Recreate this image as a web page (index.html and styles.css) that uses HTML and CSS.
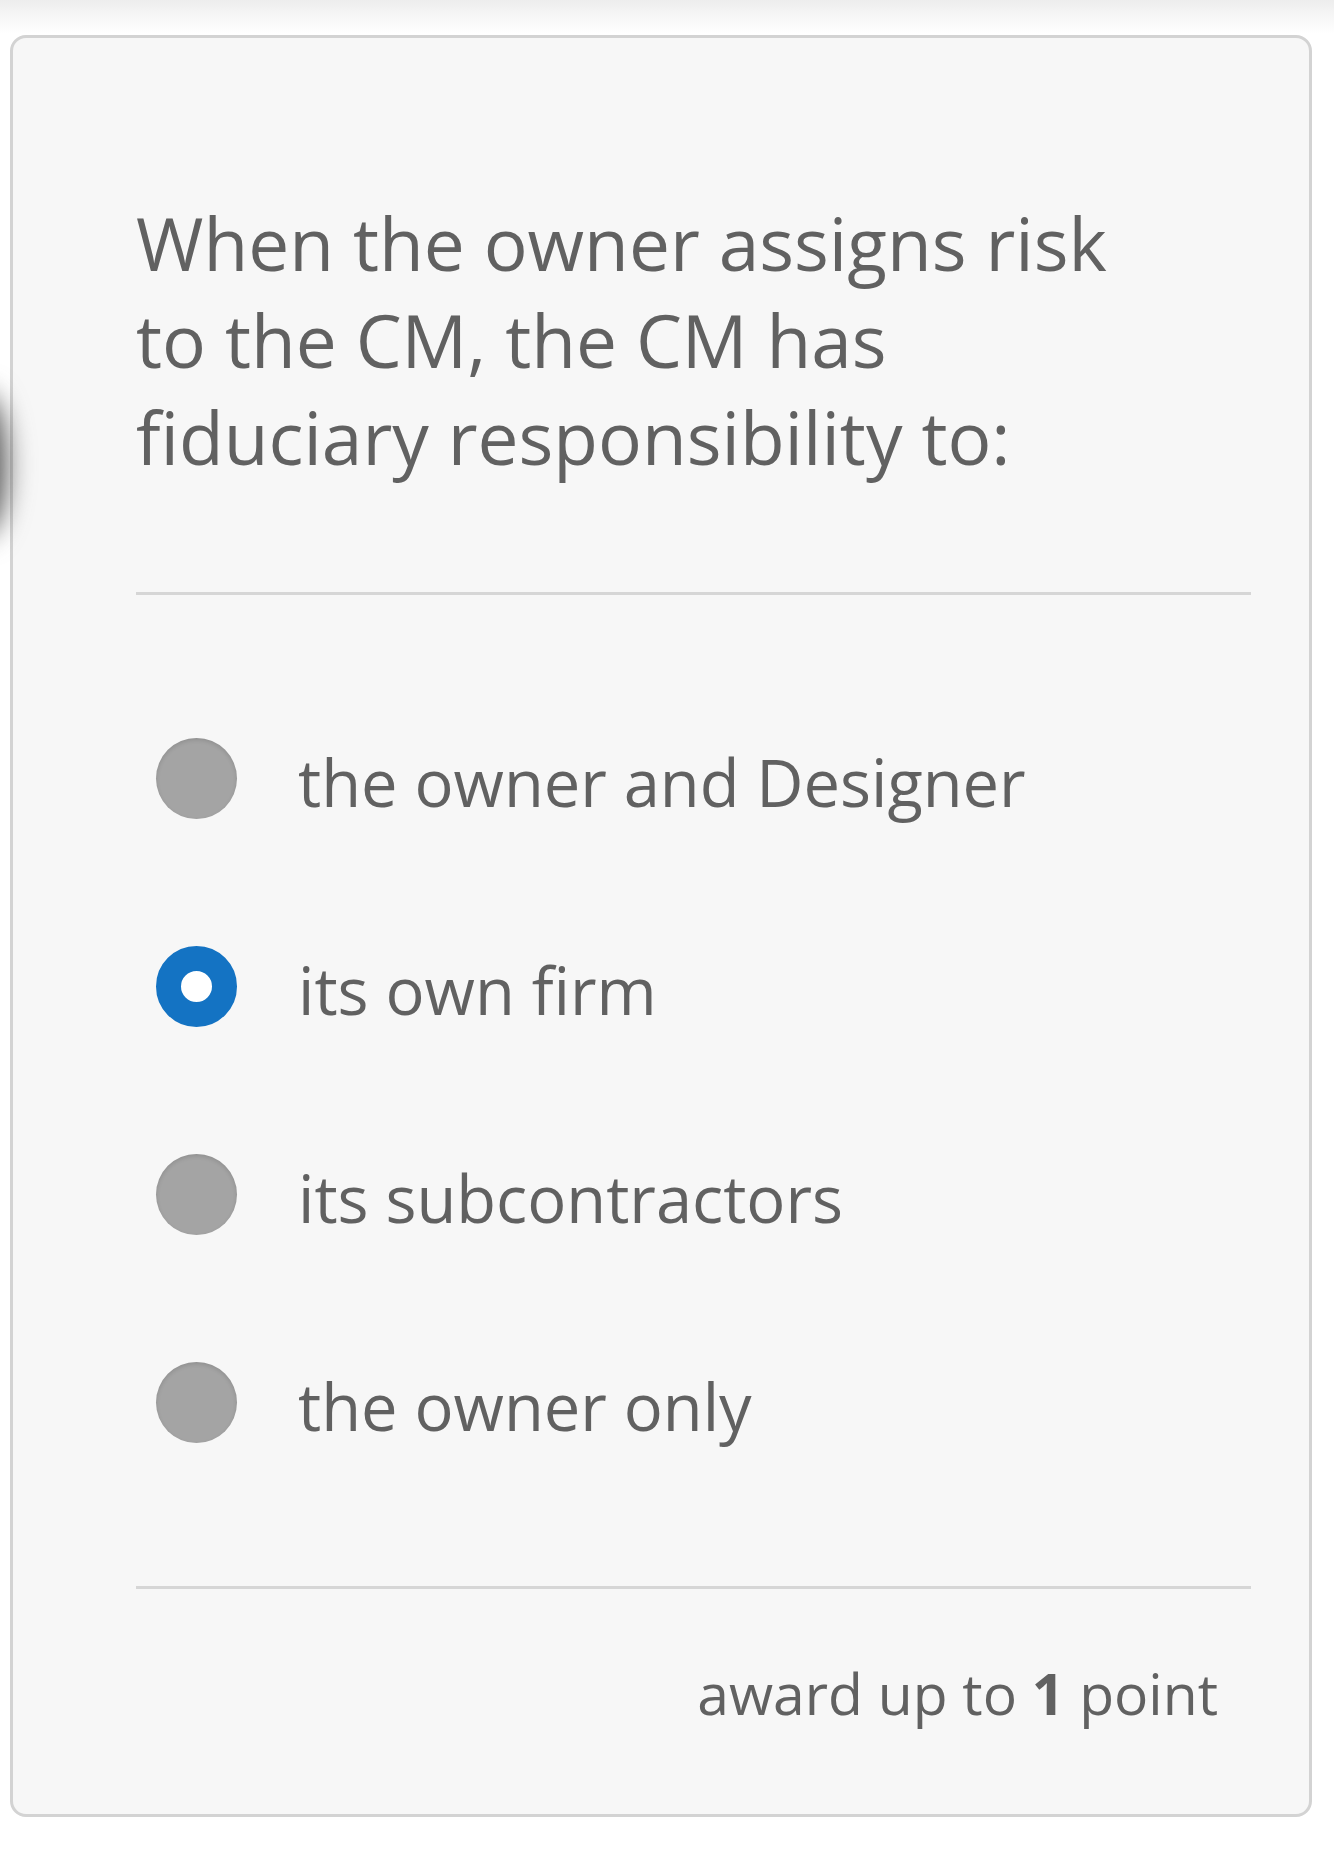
FILE: index.html
```html
<!DOCTYPE html>
<html lang="en">
<head>
<meta charset="utf-8">
<title>Question</title>
<link rel="stylesheet" href="styles.css">
</head>
<body>
<div class="topbar"></div>
<div class="edge-shadow"></div>
<main class="card">
  <h1 class="question">When the owner assigns risk to the CM, the CM has fiduciary responsibility to:</h1>
  <hr class="divider">
  <ul class="options">
    <li class="option"><span class="radio"></span><span class="label">the owner and Designer</span></li>
    <li class="option"><span class="radio checked"></span><span class="label">its own firm</span></li>
    <li class="option"><span class="radio"></span><span class="label">its subcontractors</span></li>
    <li class="option"><span class="radio"></span><span class="label">the owner only</span></li>
  </ul>
  <hr class="divider">
  <p class="award">award up to <strong>1</strong> point</p>
</main>
</body>
</html>
```

FILE: styles.css
```css
html, body {
  margin: 0;
  padding: 0;
  background: #ffffff;
}
body {
  font-family: "Open Sans", "Noto Sans", sans-serif;
  color: #616161;
  position: relative;
  overflow: hidden;
  min-height: 1852px;
}
.topbar {
  height: 34px;
  background: linear-gradient(#ededed, #f6f6f6 45%, #ffffff);
}
.edge-shadow {
  position: absolute;
  left: -44px;
  top: 392px;
  width: 50px;
  height: 145px;
  border-radius: 50%;
  background: #4e4e4e;
  filter: blur(14px);
}
.card {
  margin: 1px 0 0 10px;
  width: 1302px;
  box-sizing: border-box;
  background: #f7f7f7;
  border: 3px solid #d3d3d3;
  border-radius: 16px;
  padding: 156px 58px 83px 123px;
}
.question {
  margin: 0;
  font-size: 73px;
  font-weight: 400;
  line-height: 97px;
  width: 1010px;
}
.divider {
  margin: 0;
  border: 0;
  height: 3px;
  background: #d6d6d6;
}
.question + .divider {
  margin-top: 107px;
}
.options {
  list-style: none;
  margin: 143px 0 0 0;
  padding: 0 0 139px 20px;
  display: flex;
  flex-direction: column;
  gap: 123px;
}
.option {
  display: flex;
  align-items: flex-start;
  gap: 61px;
}
.radio {
  flex: none;
  width: 81px;
  height: 81px;
  border-radius: 50%;
  background: #a4a4a4;
  box-shadow: inset 0 2px 4px rgba(0,0,0,0.12);
}
.radio.checked {
  background: #ffffff;
  border: 25px solid #1473c3;
  box-sizing: border-box;
  box-shadow: none;
}
.label {
  font-size: 65px;
  line-height: 81px;
  margin-top: 4px;
}
.award {
  margin: 66px 33px 0 0;
  text-align: right;
  font-size: 57px;
  line-height: 76px;
}
.award strong {
  font-weight: 700;
}
```
